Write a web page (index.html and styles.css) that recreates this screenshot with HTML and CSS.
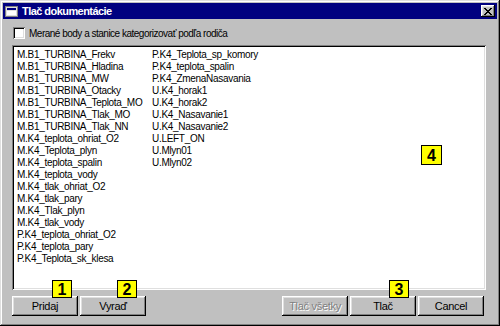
FILE: index.html
```html
<!DOCTYPE html>
<html lang="sk">
<head>
  <meta charset="UTF-8">
  <title>Tlač dokumentácie</title>
  <link rel="stylesheet" href="styles.css">
</head>
<body>
  <div class="window">
    <div class="titlebar">
      <svg class="title-icon" width="13" height="11" viewBox="0 0 13 11">
        <rect x="0" y="0" width="13" height="11" fill="#dfdfdf"/>
        <rect x="0.5" y="0.5" width="12" height="10" fill="none" stroke="#808080"/>
        <rect x="2" y="2" width="9" height="2" fill="#000080"/>
        <rect x="2" y="5" width="9" height="4" fill="#fff"/>
      </svg>
      <span class="title-text">Tlač dokumentácie</span>
      <button class="close-btn">
        <svg width="8" height="7" viewBox="0 0 8 7">
          <path d="M0 0 L7 7 M1 0 L8 7 M7 0 L0 7 M8 0 L1 7" stroke="#000" stroke-width="1"/>
        </svg>
      </button>
    </div>

    <div class="content">
      <label class="check-row">
        <span class="checkbox"></span>
        <span class="check-label">Merané body a stanice kategorizovať podľa rodiča</span>
      </label>

      <div class="listbox">
        <div class="col">
          <div>M.B1_TURBINA_Frekv</div>
          <div>M.B1_TURBINA_Hladina</div>
          <div>M.B1_TURBINA_MW</div>
          <div>M.B1_TURBINA_Otacky</div>
          <div>M.B1_TURBINA_Teplota_MO</div>
          <div>M.B1_TURBINA_Tlak_MO</div>
          <div>M.B1_TURBINA_Tlak_NN</div>
          <div>M.K4_teplota_ohriat_O2</div>
          <div>M.K4_Teplota_plyn</div>
          <div>M.K4_teplota_spalin</div>
          <div>M.K4_teplota_vody</div>
          <div>M.K4_tlak_ohriat_O2</div>
          <div>M.K4_tlak_pary</div>
          <div>M.K4_Tlak_plyn</div>
          <div>M.K4_tlak_vody</div>
          <div>P.K4_teplota_ohriat_O2</div>
          <div>P.K4_teplota_pary</div>
          <div>P.K4_Teplota_sk_klesa</div>
        </div>
        <div class="col">
          <div>P.K4_Teplota_sp_komory</div>
          <div>P.K4_teplota_spalin</div>
          <div>P.K4_ZmenaNasavania</div>
          <div>U.K4_horak1</div>
          <div>U.K4_horak2</div>
          <div>U.K4_Nasavanie1</div>
          <div>U.K4_Nasavanie2</div>
          <div>U.LEFT_ON</div>
          <div>U.Mlyn01</div>
          <div>U.Mlyn02</div>
        </div>
      </div>

      <div class="buttons">
        <button class="btn">Pridaj</button>
        <button class="btn">Vyraď</button>
        <span class="spacer"></span>
        <button class="btn" disabled>Tlač všetky</button>
        <button class="btn">Tlač</button>
        <button class="btn">Cancel</button>
      </div>
    </div>

    <span class="badge b1">1</span>
    <span class="badge b2">2</span>
    <span class="badge b3">3</span>
    <span class="badge b4">4</span>
  </div>
</body>
</html>
```

FILE: styles.css
```css
body {
  margin: 0;
  font-family: "Liberation Sans", Arial, sans-serif;
  font-size: 11px;
  color: #000;
}
.window {
  position: relative;
  width: 500px;
  height: 326px;
  box-sizing: border-box;
  padding: 3px;
  background: #c0c0c0;
  box-shadow: inset -1px -1px #000, inset 1px 1px #dfdfdf,
              inset -2px -2px #808080, inset 2px 2px #fff;
}
.titlebar {
  height: 16px;
  background: #000080;
  display: flex;
  align-items: center;
  padding: 0 2px 0 2px;
}
.title-icon {
  margin-right: 4px;
}
.title-text {
  color: #fff;
  font-weight: bold;
  font-size: 11px;
  letter-spacing: -0.55px;
  flex: 1;
}
.close-btn {
  width: 14px;
  height: 12px;
  padding: 0;
  border: none;
  background: #c0c0c0;
  display: flex;
  align-items: center;
  justify-content: center;
  box-shadow: inset -1px -1px #000, inset 1px 1px #fff,
              inset -2px -2px #808080, inset 2px 2px #dfdfdf;
}
.content {
  padding: 8px 11px 0 9px;
}
.check-row {
  display: flex;
  align-items: center;
  height: 12px;
  gap: 4px;
  padding-left: 1px;
}
.check-label {
  font-size: 10px;
  letter-spacing: -0.5px;
}
.checkbox {
  width: 12px;
  height: 12px;
  box-sizing: border-box;
  background: #fff;
  box-shadow: inset 1px 1px #808080, inset -1px -1px #fff,
              inset 2px 2px #000, inset -2px -2px #dfdfdf;
}
.listbox {
  margin-top: 6px;
  height: 245px;
  box-sizing: border-box;
  padding: 4px 2px 2px 5px;
  background: #fff;
  display: flex;
  font-size: 10px;
  letter-spacing: -0.3px;
  line-height: 12px;
  box-shadow: inset 1px 1px #808080, inset -1px -1px #fff,
              inset 2px 2px #000, inset -2px -2px #dfdfdf;
}
.col {
  width: 135px;
  white-space: nowrap;
}
.buttons {
  display: flex;
  gap: 2px;
  margin-top: 6px;
  padding-right: 2px;
}
.spacer {
  flex: 1;
}
.btn {
  width: 66px;
  height: 20px;
  padding: 0;
  border: none;
  background: #c0c0c0;
  font-family: "Liberation Sans", Arial, sans-serif;
  font-size: 11px;
  letter-spacing: -0.3px;
  color: #000;
  box-shadow: inset -1px -1px #000, inset 1px 1px #fff,
              inset -2px -2px #808080, inset 2px 2px #dfdfdf;
}
.btn:disabled {
  color: #808080;
  text-shadow: 1px 1px #fff;
}
.badge {
  position: absolute;
  width: 18px;
  height: 16px;
  border: 1px solid #000;
  background: #ffff00;
  font-weight: bold;
  font-size: 16px;
  line-height: 17px;
  text-align: center;
}
.b1 { left: 52px; top: 280px; }
.b2 { left: 117px; top: 280px; }
.b3 { left: 389px; top: 280px; }
.b4 { left: 421px; top: 145px; width: 19px; height: 18px; line-height: 19px; }
```
